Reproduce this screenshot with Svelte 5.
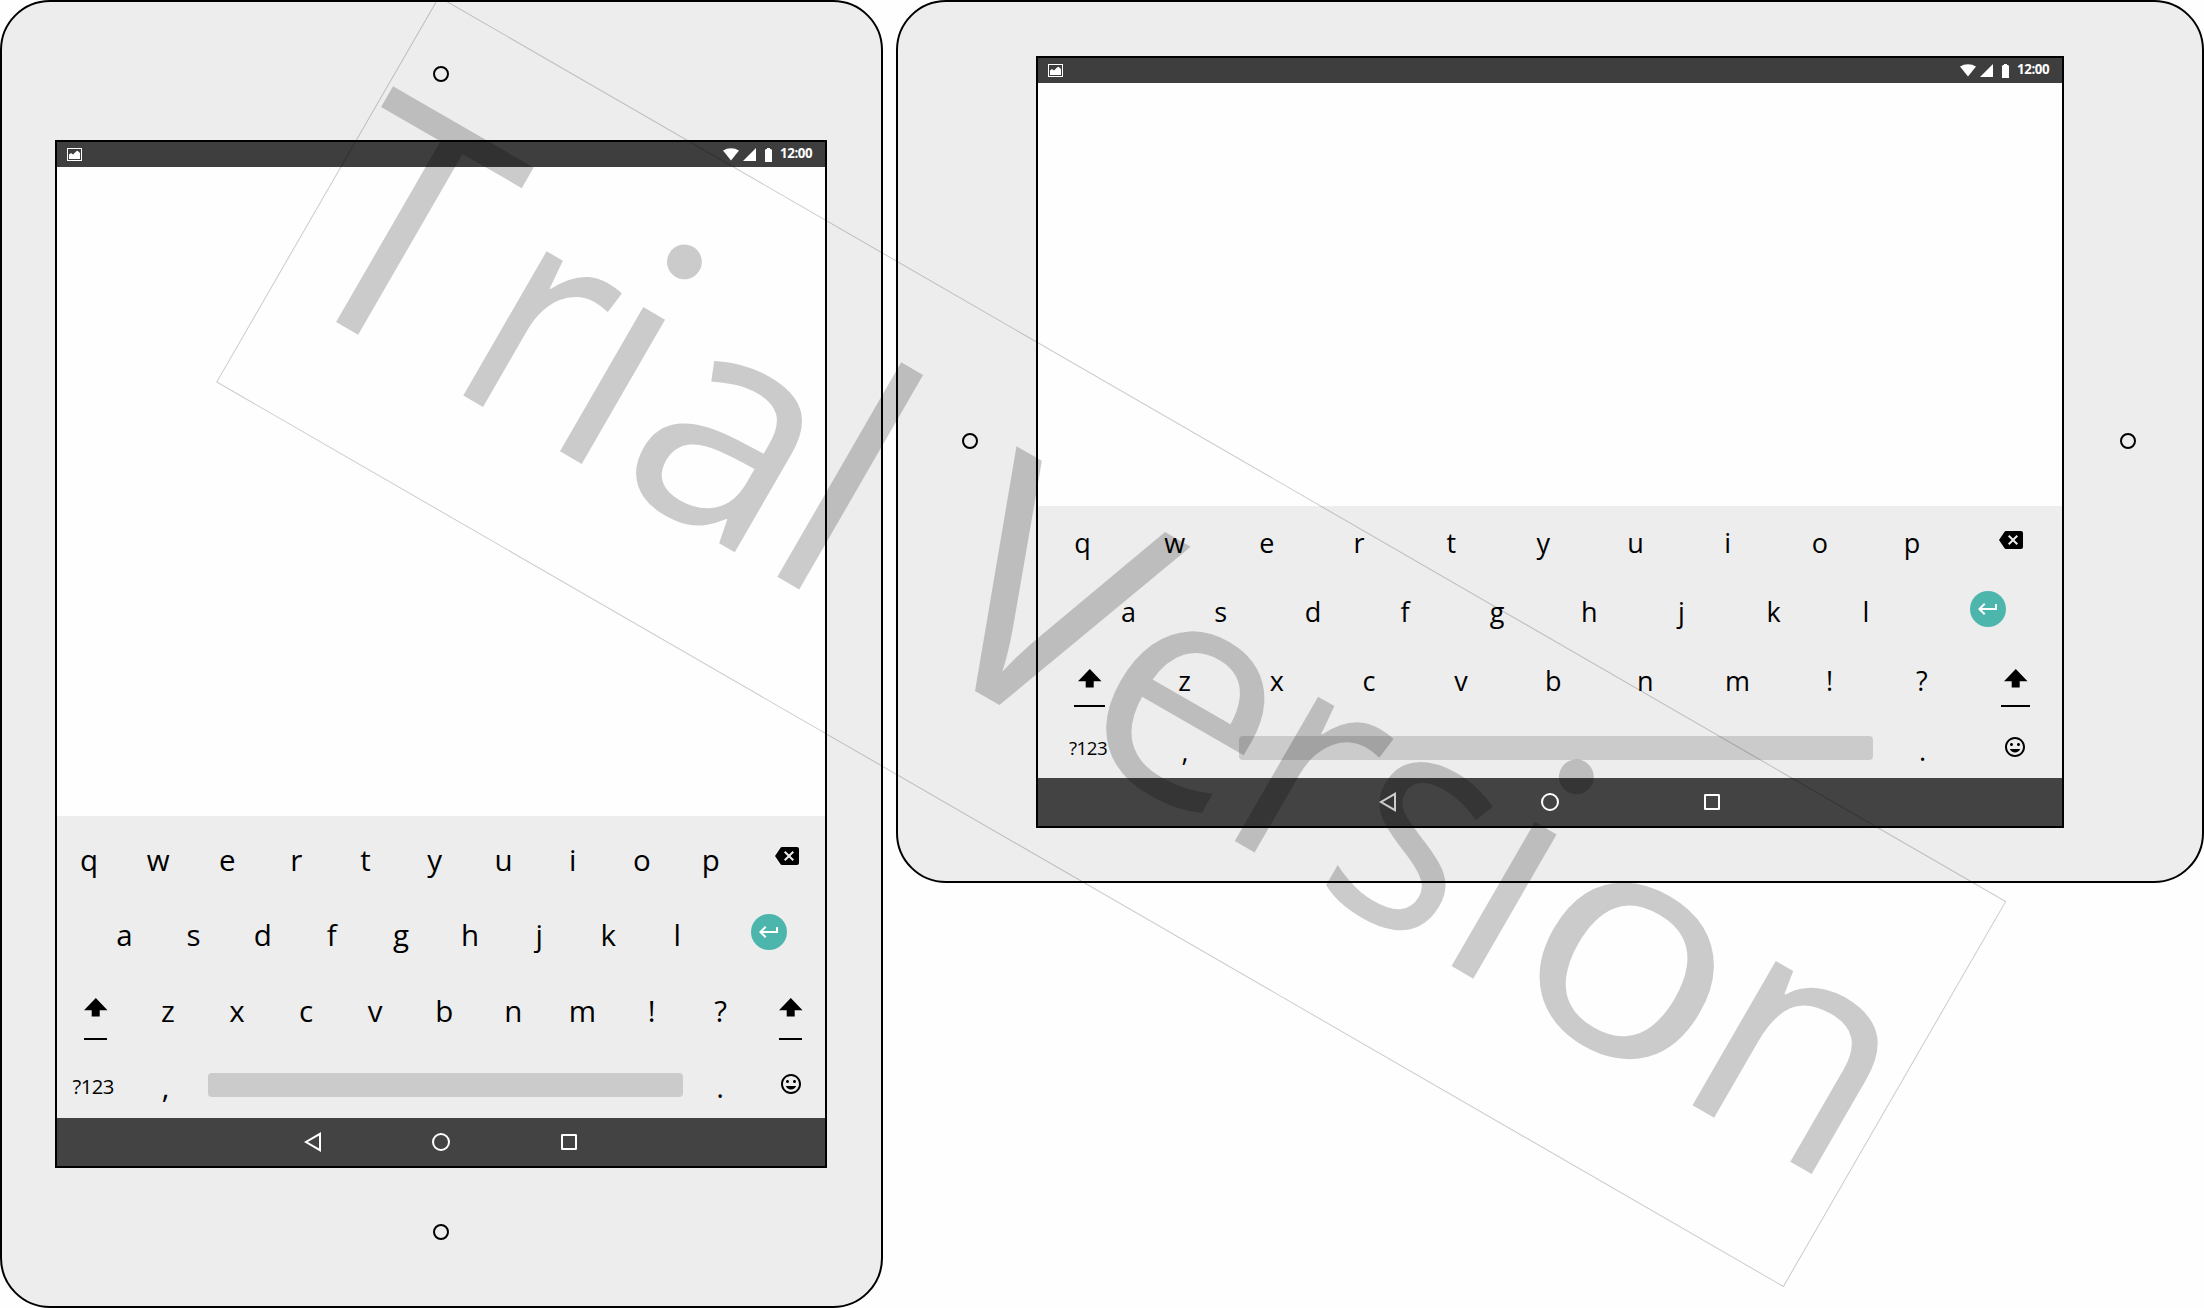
<script>
  const rows = ['qwertyuiop', 'asdfghjkl', 'zxcvbnm!?'].map((r) => [...r]);

  // [glyph, origin x, horizontal scale, vertical scale] on the watermark baseline
  const mark = [
    ['T', 2.1, 0.937, 1],
    ['r', 196.3, 0.86, 0.955],
    ['i', 305.5, 0.95, 0.955],
    ['a', 388.5, 0.94, 0.955],
    ['l', 556.5, 0.95, 1],
    ['V', 724.7, 1.035, 1],
    ['e', 914.5, 0.973, 0.955],
    ['r', 1087.2, 0.86, 0.955],
    ['s', 1198, 0.873, 0.955],
    ['i', 1335, 0.95, 0.955],
    ['o', 1412, 1.053, 0.955],
    ['n', 1613.3, 0.946, 0.955]
  ];
  const dots = [345, 1374.9];
</script>

{#snippet shift(side)}
  <div class="shift {side}">
    <svg width="24" height="19" viewBox="0 0 24 19"><path d="M11.8 0 23.5 12.3h-7.8v6.2h-8v-6.2H0z" /></svg>
    <span></span>
  </div>
{/snippet}

{#snippet letters(list)}
  <div class="letters">
    {#each list as c}<span>{c}</span>{/each}
  </div>
{/snippet}

{#snippet screen()}
  <div class="screen">
    <div class="status">
      <svg width="15" height="13" viewBox="0 0 15 13">
        <rect x=".5" y=".5" width="14" height="12" fill="none" stroke="#fff" />
        <path fill="#fff" d="M2 11V6.5L4 5l2 1.5L9 3.5l1.5-.7L13 5v6z" />
      </svg>
      <svg class="wifi" width="16" height="13" viewBox="0 0 16 13"><path fill="#fff" d="M0 2.6C4.5-.7 11.5-.7 16 2.6L8 12.5z" /></svg>
      <svg class="cell" width="13" height="13" viewBox="0 0 13 13"><path fill="#fff" d="M13 0v13H0z" /></svg>
      <svg class="battery" width="7" height="14" viewBox="0 0 7 14"><path fill="#fff" d="M2 0h3v1h1l1 1v12H0V2l1-1h1z" /></svg>
      <span class="time">12:00</span>
    </div>
    <div class="content"></div>
    <div class="keyboard">
      <div class="row r1">
        {@render letters(rows[0])}
        <svg class="backspace" width="24" height="24" viewBox="0 0 24 24"><path d="M22 3H7c-.69 0-1.23.35-1.59.88L0 12l5.41 8.11c.36.53.9.89 1.59.89h15c1.1 0 2-.9 2-2V5c0-1.100-.9-2-2-2zm-3 12.590L17.590 17 14 13.410 10.410 17 9 15.590 12.590 12 9 8.410 10.410 7 14 10.590 17.590 7 19 8.410 15.410 12 19 15.590z" /></svg>
      </div>
      <div class="row r2">
        {@render letters(rows[1])}
        <div class="enter">
          <svg width="24" height="24" viewBox="0 0 24 24"><path fill="#fff" d="M19 7v4H5.830l3.580-3.590L8 6l-6 6 6 6 1.410-1.410L5.830 13H21V7z" /></svg>
        </div>
      </div>
      <div class="row r3">
        {@render shift('left')}
        {@render letters(rows[2])}
        {@render shift('right')}
      </div>
      <div class="row r4">
        <span class="sym">?123</span>
        <span class="punct comma">,</span>
        <span class="space"></span>
        <span class="punct period">.</span>
        <svg class="smile" width="24" height="24" viewBox="0 0 24 24"><path d="M11.990 2C6.470 2 2 6.480 2 12s4.470 10 9.990 10C17.520 22 22 17.520 22 12S17.520 2 11.990 2zM12 20c-4.420 0-8-3.580-8-8s3.580-8 8-8 8 3.580 8 8-3.580 8-8 8zm3.500-9c.830 0 1.500-.670 1.500-1.500S16.330 8 15.500 8 14 8.670 14 9.500s.670 1.500 1.500 1.500zm-7 0c.830 0 1.500-.670 1.500-1.500S9.330 8 8.500 8 7 8.670 7 9.500 7.670 11 8.500 11zm3.500 6.500c2.330 0 4.310-1.460 5.110-3.500H6.890c.8 2.040 2.780 3.500 5.110 3.500z" /></svg>
      </div>
    </div>
    <div class="nav">
      <svg width="20" height="20" viewBox="0 0 20 20"><path d="M17 1.8v16.4L3 10z" /></svg>
      <svg width="20" height="20" viewBox="0 0 20 20"><circle cx="10" cy="10" r="8" /></svg>
      <svg width="20" height="20" viewBox="0 0 20 20"><rect x="3" y="3" width="14" height="14" rx=".3" /></svg>
    </div>
  </div>
{/snippet}

<main>
  <section class="device portrait">
    <i class="camera"></i>
    {@render screen()}
    <i class="camera"></i>
  </section>
  <section class="device landscape">
    <i class="camera"></i>
    {@render screen()}
    <i class="camera"></i>
  </section>
  <svg class="watermark" width="2204" height="1308" viewBox="0 0 2204 1308">
    <clipPath id="stem"><rect x="-20" y="-190" width="150" height="200" /></clipPath>
    <g transform="translate(439 -3) rotate(30)">
      <rect class="frame" width="1809" height="444.5" />
      {#each mark as [c, x, sx, sy]}
        <text transform="translate({x} 333) scale({sx} {sy})" clip-path={c === 'i' ? 'url(#stem)' : undefined}>{c}</text>
      {/each}
      {#each dots as cx}
        <circle {cx} cy="106.7" r="17.4" />
      {/each}
    </g>
  </svg>
</main>

<style>
  :global(body) { background: #fefefe; }
  main {
    position: relative;
    display: flex;
    align-items: flex-start;
    gap: 13px;
    width: 2204px;
    height: 1308px;
    overflow: hidden;
    font-family: 'Open Sans', 'Noto Sans', sans-serif;
    color: #000;
  }
  svg { display: block; flex: none; }
  .device {
    box-sizing: border-box;
    flex: none;
    display: flex;
    align-items: flex-start;
    background: #ededed;
    border: 2px solid #000;
    border-radius: 50px;
  }
  .portrait {
    flex-direction: column;
    width: 883px;
    height: 1308px;
    padding: 64px 0 0 53px;
    --pitch: 69.1px;
    --fs: 29.5px;
    --row: 75.5px;
    --key-top: 13.6px;
  }
  .landscape {
    width: 1308px;
    height: 883px;
    padding: 54px 0 0 64px;
    --pitch: 92.16px;
    --fs: 27px;
    --row: 69px;
    --key-top: 7px;
  }
  .camera {
    box-sizing: border-box;
    flex: none;
    width: 16px;
    height: 16px;
    border: 2px solid #000;
    border-radius: 50%;
  }
  .portrait .camera { margin-left: 378.4px; }
  .landscape .camera { margin-top: 377.4px; }
  .screen {
    box-sizing: border-box;
    flex: none;
    display: flex;
    flex-direction: column;
    border: 2px solid #000;
    background: #fefefe;
  }
  .portrait .screen { width: 772px; height: 1028px; margin: 58px 0 56px; }
  .landscape .screen { width: 1028px; height: 772px; margin: 0 56px 0 58px; }

  .status {
    display: flex;
    align-items: center;
    height: 25px;
    padding: 0 13px 0 10px;
    background: #3e3e3e;
  }
  .wifi { margin-left: auto; }
  .cell { margin-left: 4px; }
  .battery { margin-left: 9px; }
  .time {
    width: 32px;
    margin-left: 8px;
    font-size: 13.3px;
    line-height: 21px;
    padding-bottom: 3px;
    font-weight: 700;
    letter-spacing: -0.4px;
    color: #fff;
    white-space: nowrap;
  }
  .content { flex: 1; }

  .keyboard { background: #ededed; }
  .portrait .keyboard { height: 302px; }
  .landscape .keyboard { height: 272px; }
  .row { display: flex; align-items: flex-start; height: var(--row); }
  .landscape .r4 { height: 65px; }
  .letters { display: flex; flex: none; padding-top: var(--key-top); }
  .letters span {
    width: var(--pitch);
    text-align: center;
    font-size: var(--fs);
    line-height: 60px;
  }

  .portrait .r1 { margin-left: -2.5px; }
  .portrait .backspace { margin: 28px 0 0 29.5px; }
  .landscape .r1 { margin-left: -1.5px; }
  .landscape .backspace { margin: 22px 0 0 41.4px; }

  .portrait .r2 { padding-left: 33px; }
  .landscape .r2 { padding-left: 44.5px; }
  .enter {
    display: flex;
    align-items: center;
    justify-content: center;
    width: 36px;
    height: 36px;
    border-radius: 50%;
    background: #4db6ac;
  }
  .portrait .enter { margin: 22.5px 0 0 39.1px; }
  .landscape .enter { margin: 16px 0 0 58.1px; }

  .shift { display: flex; flex-direction: column; align-items: center; flex: none; }
  .shift span { height: 2px; background: #000; align-self: stretch; }
  .portrait .shift { width: 23px; padding-top: 31px; gap: 21px; }
  .landscape .shift { width: 31px; padding-top: 25px; gap: 17px; }
  .landscape .shift.right { width: 29px; }
  .portrait .left { margin: 0 26.4px 0 27px; }
  .portrait .right { margin-left: 24.2px; }
  .landscape .left { margin: 0 33.5px 0 36px; }
  .landscape .right { margin-left: 33.2px; }

  .sym { white-space: nowrap; line-height: 30px; flex: none; }
  .portrait .sym { width: 45px; margin: 28.5px 0 0 15.5px; font-size: 20.3px; letter-spacing: -0.6px; }
  .landscape .sym { width: 45px; margin: 20px 0 0 31px; font-size: 18.7px; letter-spacing: -0.5px; }
  .punct {
    flex: none;
    width: 20px;
    padding-top: var(--key-top);
    text-align: center;
    font-size: var(--fs);
    line-height: 62px;
  }
  .portrait .comma { margin-left: 38px; }
  .landscape .comma { margin-left: 61px; }
  .space { flex: none; height: 24px; border-radius: 4px; background: #cbcbcb; }
  .portrait .space { width: 475px; margin: 30.5px 0 0 32.5px; }
  .landscape .space { width: 634px; margin: 23px 0 0 44px; }
  .portrait .period { margin-left: 27px; }
  .landscape .period { margin-left: 39.5px; }
  .portrait .smile { margin: 29.5px 0 0 49px; }
  .landscape .smile { margin: 22px 0 0 70.5px; }

  .nav {
    display: flex;
    align-items: center;
    justify-content: center;
    height: 48px;
    background: #434343;
  }
  .portrait .nav { gap: 108px; }
  .landscape .nav { gap: 142px; }
  .nav svg { fill: none; stroke: #fff; stroke-width: 2; }

  .watermark { position: absolute; inset: 0; pointer-events: none; }
  .watermark .frame { fill: none; stroke: #000; stroke-opacity: 0.2; }
  .watermark text { font-size: 326px; fill: #000; fill-opacity: 0.2; }
  .watermark circle { fill: #000; fill-opacity: 0.2; }
</style>
